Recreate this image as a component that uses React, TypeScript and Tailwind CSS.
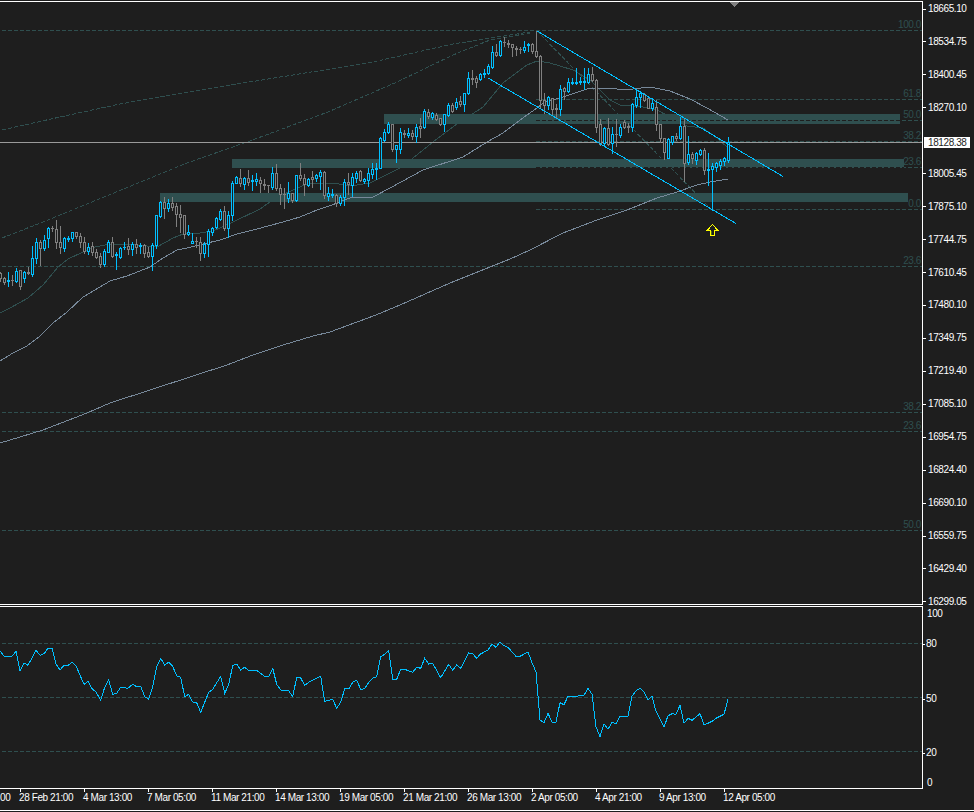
const bg = "#1e1e1e";
const teal = "#2f4f4f";
const blue = "#00bfff";
const gray = "#808080";
const slate = "#778899";

// up, body top, body bottom, wick top, wick bottom (page pixels), one candle every 4px
const candles: number[][] = [
  [0,273,278,272,281],[0,278,282,277,284],[1,280,281,272,286],[0,280,280,275,285],[1,271,281,268,282],[0,270,286,270,289],[1,272,278,271,282],[0,272,273,267,274],
  [1,258,274,246,276],[1,242,258,238,263],[0,242,248,240,265],[1,240,248,235,250],[1,228,238,227,247],[0,228,228,226,231],[0,229,242,220,248],[0,242,247,226,253],
  [1,238,248,237,251],[1,238,239,236,241],[1,232,238,232,241],[0,232,236,232,238],[0,236,242,233,247],[0,242,251,237,253],[1,247,251,243,254],[0,246,252,242,255],
  [0,252,257,249,258],[0,256,264,253,267],[1,251,264,249,266],[1,242,252,240,252],[0,242,256,237,257],[1,254,255,252,269],[1,248,257,247,258],[1,247,247,242,249],
  [0,246,249,238,254],[1,244,249,242,255],[0,244,247,239,253],[1,245,246,243,253],[0,245,253,244,257],[0,252,256,247,257],[1,245,256,243,270],[1,215,245,215,248],
  [1,202,216,201,217],[0,202,208,197,218],[1,203,208,199,211],[0,203,207,197,210],[0,206,214,203,226],[0,214,217,205,232],[0,215,234,215,238],[1,232,234,225,235],
  [1,241,243,233,243],[0,241,241,237,247],[0,242,253,237,260],[1,244,253,242,257],[1,231,244,229,256],[1,228,232,227,235],[1,218,227,217,228],[1,211,219,209,220],
  [0,211,228,206,230],[1,215,228,211,237],[1,183,215,181,220],[1,177,183,176,183],[0,178,183,169,186],[1,178,184,177,189],[0,178,182,170,185],[1,180,181,175,190],
  [1,179,181,173,185],[0,180,183,177,192],[0,184,185,179,189],[0,185,185,185,192],[1,173,187,167,189],[0,173,188,164,190],[0,188,194,184,204],[0,194,194,188,208],
  [1,193,198,182,202],[0,193,200,193,202],[1,175,200,175,201],[0,175,178,163,180],[0,178,184,174,195],[1,179,185,178,186],[0,177,179,171,187],[1,175,178,174,181],
  [1,172,176,170,189],[0,172,195,171,198],[1,193,196,187,200],[1,194,195,189,197],[0,195,203,194,206],[1,197,203,195,205],[1,182,197,179,205],[0,182,184,173,194],
  [1,177,185,173,196],[1,173,178,171,182],[0,171,180,170,181],[1,179,181,178,183],[1,173,180,168,186],[1,169,174,163,178],[1,168,169,163,179],[1,138,168,137,168],
  [1,132,140,129,141],[1,124,132,122,133],[0,124,149,124,151],[1,145,149,145,162],[1,132,149,128,153],[0,133,134,130,137],[1,133,135,128,137],[0,133,136,130,139],
  [1,127,136,124,142],[0,126,128,118,137],[1,111,127,109,128],[0,112,116,109,118],[1,113,117,112,119],[0,115,119,113,120],[0,118,124,118,125],[1,114,124,114,131],
  [1,105,115,103,116],[0,105,111,103,112],[1,102,107,98,109],[0,101,104,96,106],[1,93,104,93,111],[1,78,93,72,94],[0,78,79,70,84],[0,78,82,76,87],
  [1,74,79,73,80],[1,73,74,69,77],[1,66,73,64,74],[1,52,67,46,68],[0,52,55,44,56],[1,41,55,40,56],[0,42,42,37,46],[0,43,44,40,47],
  [0,44,47,44,56],[0,48,49,46,55],[0,49,49,47,53],[1,47,50,41,52],[1,44,45,43,51],[0,44,51,43,53],[0,51,56,31,57],[0,56,100,55,107],
  [0,100,105,93,113],[1,97,105,96,109],[0,98,109,98,114],[0,108,109,104,117],[1,89,109,85,115],[0,88,91,87,99],[1,82,91,78,92],[1,82,83,78,84],
  [1,82,83,68,84],[1,81,82,77,84],[1,81,82,68,89],[1,74,82,68,83],[0,74,80,67,81],[0,80,127,79,132],[0,124,144,119,145],[1,128,143,127,145],
  [0,128,144,118,145],[1,134,143,127,153],[0,134,134,119,146],[1,127,135,124,137],[0,122,127,120,128],[0,126,127,123,132],[1,104,127,103,131],[1,97,105,90,107],
  [1,93,97,91,107],[0,94,100,93,101],[0,98,108,97,108],[1,103,108,98,110],[0,107,124,100,130],[0,124,138,124,142],[0,138,152,138,159],[1,139,158,138,158],
  [1,136,142,136,144],[0,136,138,133,140],[1,126,138,117,139],[0,126,163,118,181],[1,154,162,136,164],[0,154,158,152,163],[1,153,160,152,164],[1,150,154,149,155],
  [0,150,170,148,174],[1,169,170,153,185],[1,166,169,163,210],[1,163,167,162,171],[1,161,165,159,169],[1,158,161,157,165],[1,142,160,137,162],
];

const fastMa = "0,313 10,308 28,298 43,285 58,267 68,259 83,252 95,247 110,244 127,244 157,247 173,238 183,234 200,233 213,231 233,222 260,209 277,197 293,190 307,184 333,183 350,186 370,183 400,168 413,158 433,142 457,124 483,107 503,83 527,65 537,61 550,63 573,70 590,80 600,90 610,100 620,105 643,107 657,110 670,117 687,126 703,128 717,138 727,147";
const midMa = "0,361 13,353 27,346 40,336 53,323 67,312 83,297 100,287 110,281 127,276 150,267 163,258 177,250 187,248 203,244 220,240 237,234 257,229 283,222 300,217 317,210 332,205 350,198 373,197 390,188 423,170 463,157 487,142 503,133 520,120 537,108 543,103 563,97 590,88 617,89 633,89 650,87 660,89 670,91 690,99 707,108 728,120";
const longMa = "0,443 20,437 43,430 87,413 110,403 150,390 193,376 227,365 253,355 283,345 313,336 330,332 376,315 400,305 450,283 510,259 530,250 563,233 597,220 627,210 657,198 677,192 697,185 710,182 728,179";
const fanA = "2,130 60,117 120,104 200,90 330,69 373,62 453,44 497,37 530,32";
const fanB = "2,238 43,222 187,163 247,142 328,112 397,82 453,55 490,40 530,33";

const rsiLeft: [number, number][] = [
  [0,182],[12,199],[36,199],[48,184],[60,243],[72,219],[84,226],[108,181],[120,196],[132,191],[144,175],[156,175],[168,222],[180,240],[192,226],[204,226],[216,217],[228,228],[252,283],[264,274],[276,296],[288,306],[302,331],[314,292],[326,270],[338,313],[350,310],[362,292],[384,295],[398,283],[410,290],[422,289],[434,320],[446,328],[458,290],[470,229],[482,205],[494,226],[506,216],[518,229],[530,258],[542,262],[554,320],[566,313],[578,336],[590,338],[602,367],[614,337],[626,307],[638,298],[662,259],[674,310],[686,284],[698,226],[710,222],[722,240],[734,232],[746,241],[770,241],[794,259],[806,259],[818,235],[830,283],[842,300],[866,302],[878,320],[890,262],[902,264],[914,286],[926,277],[948,266],[962,259],[974,334],[998,328],[1010,355],[1022,337],[1034,296],[1046,297],[1058,277],[1070,271],[1082,298],[1094,296],[1106,277],[1118,265],[1130,260],[1142,200],[1154,193],[1166,181],[1178,268],[1190,268],[1202,238],[1214,238],[1238,247],[1250,232],[1262,235],[1274,205],[1286,222],[1298,220],[1322,263],[1346,223],[1358,241],[1370,225],[1382,235],[1406,189],[1418,191],[1430,205],
];
const rsiRight: [number, number][] = [
  [0,193],[24,180],[36,162],[48,172],[60,156],[72,167],[84,172],[108,199],[120,199],[144,186],[156,218],[168,246],[180,390],[192,398],[204,370],[216,397],[228,397],[240,338],[252,344],[264,319],[288,319],[312,316],[324,295],[336,313],[348,410],[360,440],[372,401],[384,418],[396,397],[408,401],[420,379],[444,378],[456,319],[468,302],[480,295],[492,307],[504,331],[516,319],[528,364],[552,412],[564,377],[576,371],[588,373],[600,346],[612,400],[624,385],[636,391],[660,371],[672,404],[684,400],[696,394],[708,385],[732,373],[744,328],
];
const rsi = [
  ...rsiLeft.map(([x, y]) => `${(x / 3).toFixed(1)},${(590 + y / 3).toFixed(1)}`),
  ...rsiRight.map(([x, y]) => `${(480 + x / 3).toFixed(1)},${(590 + y / 3).toFixed(1)}`),
].join(" ");

const prices = ["18665.10", "18534.75", "18400.45", "18270.10", "", "18005.45", "17875.10", "17744.75", "17610.45", "17480.10", "17349.75", "17219.40", "17085.10", "16954.75", "16824.40", "16690.10", "16559.75", "16429.40", "16299.05"];
const dates = ["28 Feb 21:00", "4 Mar 13:00", "7 Mar 05:00", "11 Mar 21:00", "14 Mar 13:00", "19 Mar 05:00", "21 Mar 21:00", "26 Mar 13:00", "2 Apr 05:00", "4 Apr 21:00", "9 Apr 13:00", "12 Apr 05:00"];

const fibLines: [number, number][] = [[2, 30], [536, 99], [536, 120], [536, 141], [536, 167], [536, 209], [2, 266], [2, 412], [2, 431], [2, 530]];
const fibLabels: [string, number][] = [["100.0", 28], ["61.8", 97], ["50.0", 118], ["38.2", 139], ["23.6", 165], ["0.0", 207], ["23.6", 264], ["38.2", 410], ["23.6", 429], ["50.0", 528]];

function Candles() {
  return (
    <g>
      {candles.map((c, i) => {
        const x = i * 4;
        const color = c[0] ? blue : gray;
        return (
          <g key={i}>
            <line x1={x + 0.5} x2={x + 0.5} y1={c[3]} y2={c[4] + 1} stroke={color} />
            {c[2] - c[1] < 1 ? (
              <line x1={x - 1} x2={x + 2} y1={c[1] + 0.5} y2={c[1] + 0.5} stroke={color} />
            ) : (
              <rect x={x - 0.5} y={c[1] + 0.5} width={2} height={c[2] - c[1]} fill={bg} stroke={color} />
            )}
          </g>
        );
      })}
    </g>
  );
}

function MainChart() {
  return (
    <svg width={922} height={602} viewBox="0 2 922 602" shapeRendering="crispEdges" fontFamily="'Liberation Sans', sans-serif" className="block">
      <rect x={384} y={114} width={516} height={10} fill={teal} />
      <rect x={232} y={159} width={672} height={9} fill={teal} />
      <rect x={160} y={193} width={748} height={9} fill={teal} />

      {fibLines.map(([x, y]) => (
        <line key={y} x1={x} x2={922} y1={y + 0.5} y2={y + 0.5} stroke={teal} strokeDasharray="4 2" />
      ))}
      <line x1={536} x2={900} y1={120.5} y2={120.5} stroke={bg} strokeDasharray="4 2" />
      <line x1={536} x2={904} y1={167.5} y2={167.5} stroke={bg} strokeDasharray="4 2" />
      <line x1={537} y1={31} x2={712} y2={210} stroke={teal} strokeDasharray="4 2" />
      <polyline points={fanA} fill="none" stroke={teal} strokeDasharray="4 2" />
      <polyline points={fanB} fill="none" stroke={teal} strokeDasharray="4 2" />

      {fibLabels.map(([t, y]) => (
        <text key={y} x={921} y={y} textAnchor="end" fontSize={10} letterSpacing={-0.4} fill={teal}>
          {t}
        </text>
      ))}

      <polyline points={fastMa} fill="none" stroke={teal} />
      <polyline points={midMa} fill="none" stroke={slate} />
      <polyline points={longMa} fill="none" stroke={slate} />

      <line x1={0} x2={922} y1={142.5} y2={142.5} stroke="#9a9a9a" />

      <Candles />

      <line x1={537} y1={31} x2={783} y2={176.5} stroke={blue} />
      <line x1={488} y1={78} x2={736} y2={223.5} stroke={blue} />

      <path d="M711.5 231 V235" stroke="#4b6b12" fill="none" />
      <path d="M712.5 224.5 L717.5 230 L714.5 230 L714.5 235.5 L710.5 235.5 L710.5 230 L707.5 230 Z" fill="none" stroke="#ffff00" />
      <path d="M729 2 H739 L734 7 Z" fill={gray} />
    </svg>
  );
}

function RsiChart() {
  return (
    <svg width={922} height={181} viewBox="0 607 922 181" shapeRendering="crispEdges" className="block">
      {[643, 697, 751].map((y) => (
        <line key={y} x1={2} x2={922} y1={y + 0.5} y2={y + 0.5} stroke={teal} strokeDasharray="4 2" />
      ))}
      <polyline points={rsi} fill="none" stroke={blue} />
    </svg>
  );
}

export default function App() {
  return (
    <div className="w-[974px] h-[812px] overflow-hidden bg-[#1e1e1e] text-[10px] tracking-[-0.4px] text-white font-['Liberation_Sans',sans-serif]">
      <div className="h-px" />

      {/* price window */}
      <div className="flex h-[604px]">
        <div className="w-[923px] border-t border-r border-b border-white">
          <MainChart />
        </div>
        <div className="relative flex-1 flex flex-col justify-between pt-[2px] -mb-[3px]">
          {prices.map((p, i) => (
            <div key={i} className="h-3 flex items-center">
              {p && <div className="w-[3px] h-px bg-white" />}
              <span className="ml-[2px] leading-3">{p}</span>
            </div>
          ))}
          <div className="absolute left-px top-[136px] w-[46px] h-[11px] bg-white text-[#1e1e1e] leading-[11px] pl-[4px]">18128.38</div>
        </div>
      </div>

      <div className="h-px" />

      {/* rsi window */}
      <div className="flex h-[183px]">
        <div className="w-[923px] border-t border-r border-b border-white">
          <RsiChart />
        </div>
        <div className="flex-1 flex flex-col">
          <div className="mt-[2px] h-3 leading-3 pl-[4px]">100</div>
          <div className="mt-[18px] h-3 flex items-center">
            <div className="w-[2px] h-px bg-white" />
            <span className="leading-3 ml-px">80</span>
          </div>
          <div className="mt-[43px] h-3 flex items-center">
            <div className="w-[2px] h-px bg-white" />
            <span className="leading-3 ml-px">50</span>
          </div>
          <div className="mt-[42px] h-3 flex items-center">
            <div className="w-[2px] h-px bg-white" />
            <span className="leading-3 ml-px">20</span>
          </div>
          <div className="mt-[18px] h-3 leading-3 pl-[4px]">0</div>
        </div>
      </div>

      {/* time axis */}
      <div className="flex h-[22px] border-b border-white">
        <div className="w-5 pt-[4px] leading-[10px]">00</div>
        {dates.map((d) => (
          <div key={d} className="w-16 shrink-0">
            <div className="w-px h-[3px] bg-white" />
            <div className="-ml-px mt-px leading-[10px] whitespace-nowrap">{d}</div>
          </div>
        ))}
      </div>
    </div>
  );
}
